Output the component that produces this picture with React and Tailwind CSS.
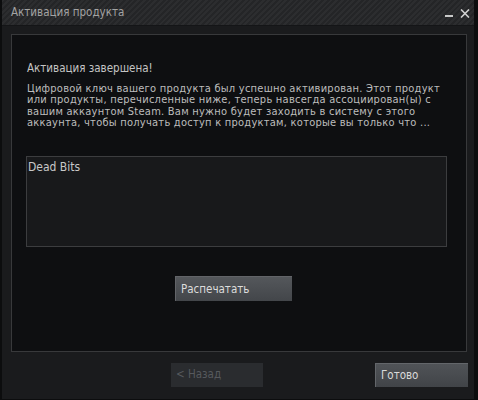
import React from 'react'

const LINES = [
  'Цифровой ключ вашего продукта был успешно активирован. Этот продукт',
  'или продукты, перечисленные ниже, теперь навсегда ассоциирован(ы) с',
  'вашим аккаунтом Steam. Вам нужно будет заходить в систему с этого',
  'аккаунта, чтобы получать доступ к продуктам, которые вы только что ...',
]

export default function App() {
  return (
    <div className="w-[478px] h-[400px] bg-[#0c0d0e] pl-[2px] pr-[4px] overflow-hidden font-['DejaVu_Sans_Condensed','Liberation_Sans',sans-serif]">
      <div className="h-[399px] bg-[#1a1b1d] flex flex-col">
        {/* title bar */}
        <div className="h-[26px] shrink-0 flex items-center pl-[9px] pr-[4px] border-b border-[#141517] bg-[repeating-linear-gradient(135deg,#2c2d2f_0px,#2c2d2f_2px,#242527_2px,#242527_4px)]">
          <span className="text-[11.5px] text-[#a3a3a3]">Активация продукта</span>
          <div className="ml-auto flex items-center gap-[7px] pt-[1px]">
            <div className="w-[8px] h-[2px] bg-[#c8c8c8] mt-[6px]" />
            <svg width="10" height="9" viewBox="0 0 10 9">
              <path d="M1 0.5 L9 8.5 M9 0.5 L1 8.5" stroke="#d0d0d0" strokeWidth="1.6" />
            </svg>
          </div>
        </div>

        <div className="pt-[8px] pl-[9px]">
          <div className="w-[456px] h-[318px] border border-[#38393b] bg-[#0e0f11] pl-[15px] pt-[26px]">
            <p className="text-[11.5px] leading-[14px] text-[#c4c4c4]">Активация завершена!</p>
            <div className="mt-[8px] text-[11px] tracking-[0.25px] leading-[11.3px] text-[#bdbdbd] whitespace-nowrap">
              {LINES.map(l => (
                <div key={l}>{l}</div>
              ))}
            </div>
            <div className="mt-[28px] -ml-[1px] w-[421px] h-[91px] border border-[#3c3d3f] bg-[#18191b] pl-[1px] pt-[3px]">
              <div className="text-[12px] leading-[14px] text-[#c8c8c8]">Dead Bits</div>
            </div>
            <button className="mt-[29px] ml-[148px] w-[117px] h-[25px] flex items-center pl-[5px] border-t border-l border-[#626468] bg-[linear-gradient(#54575b,#43464a)] text-[11.5px] text-[#dcdcdc]">
              Распечатать
            </button>
          </div>
        </div>

        <div className="mt-[11px] flex pl-[169px]">
          <button className="w-[92px] h-[24px] flex items-center pl-[5px] bg-[#2a2c2f] text-[11.5px] text-[#56595d]">
            &lt; Назад
          </button>
          <button className="ml-[112px] w-[93px] h-[24px] flex items-center pl-[5px] border-t border-l border-[#63666a] bg-[linear-gradient(#505357,#414448)] text-[11.5px] text-[#dadada]">
            Готово
          </button>
        </div>
      </div>
    </div>
  )
}
